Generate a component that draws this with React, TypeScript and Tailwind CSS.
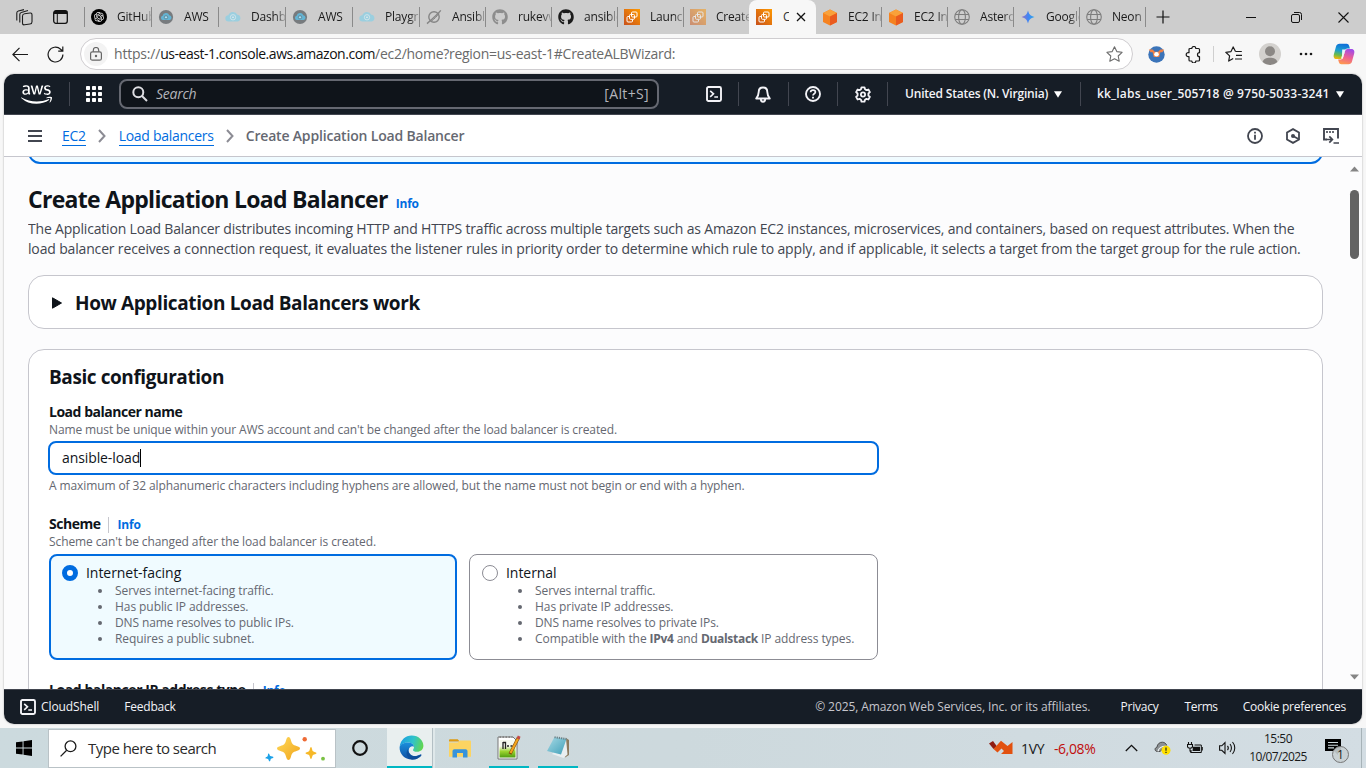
import type { ReactNode } from "react";
import { FaAws, FaGithub } from "react-icons/fa";
import { RiOpenaiFill } from "react-icons/ri";

/* ---------- favicons ---------- */

const CloudEye = ({ dark = false }: { dark?: boolean }) => (
  <svg width="18" height="16" viewBox="0 0 18 16" className={dark ? "" : "opacity-75"}>
    {dark && <circle cx="9" cy="8" r="8" fill="#777b7e" />}
    <path
      d={dark ? "M5.500 11.500a2.500 2.500 0 0 1-.3-4.900 3.900 3.900 0 0 1 7.500-.6 2.800 2.800 0 0 1 .4 5.500z" : "M4 13a3.500 3.500 0 0 1-.3-7A5.600 5.600 0 0 1 14 5.500a3.800 3.800 0 0 1 .3 7.500z"}
      fill={dark ? "#63b4d4" : "#8bd0e6"}
    />
    <circle cx="9" cy="8.300" r={dark ? 2 : 3} fill="none" stroke={dark ? "#6a8d9c" : "#d5edf5"} strokeWidth="1" />
    <circle cx="9" cy="8.300" r=".9" fill={dark ? "#dff3fa" : "#ffffff"} />
  </svg>
);

const AnsibleDoc = () => (
  <svg width="16" height="16" viewBox="0 0 16 16" fill="none" stroke="#858585" strokeWidth="1.400">
    <circle cx="8" cy="8" r="5.200" />
    <path d="M1 14.600C4 12 11.500 5.500 14.800 1.400" />
    <path d="M5 12.500C8 10 11 7.500 13 4.500" strokeWidth="1" />
  </svg>
);

const Ec2Tile = ({ faded = false }: { faded?: boolean }) => (
  <svg width="16" height="16" viewBox="0 0 16 16" className={faded ? "opacity-50" : ""}>
    <defs>
      <linearGradient id="ec2" x1="0" y1="1" x2="1" y2="0">
        <stop offset="0" stopColor="#c8511b" />
        <stop offset="1" stopColor="#ff9900" />
      </linearGradient>
    </defs>
    <rect width="16" height="16" fill="url(#ec2)" />
    <g fill="none" stroke="#fff" strokeWidth="1">
      <rect x="7.500" y="3" width="5.500" height="5" rx="1" />
      <rect x="5.500" y="5.500" width="5" height="4.800" rx="1" />
      <path d="M5.500 7.500H4a1 1 0 0 0-1 1v3.500a1 1 0 0 0 1 1h3.500a1 1 0 0 0 1-1v-1.500" />
    </g>
  </svg>
);

const Cube = () => (
  <svg width="16" height="17" viewBox="0 0 16 17">
    <path d="M8 .5 15 4v9L8 16.500 1 13V4z" fill="#f58220" />
    <path d="M8 .5 15 4 8 7.500 1 4z" fill="#f9a13a" />
    <path d="M15 4v9l-7 3.500v-9z" fill="#ea5b1f" />
  </svg>
);

const GlobeIcon = () => (
  <svg width="16" height="16" viewBox="0 0 16 16" fill="none" stroke="#7d7d7d" strokeWidth="1.100">
    <circle cx="8" cy="8" r="7.300" />
    <ellipse cx="8" cy="8" rx="3.400" ry="7.300" />
    <path d="M1.200 5.500h13.600M1.200 10.500h13.600" />
  </svg>
);

const Gemini = () => (
  <svg width="14" height="16" viewBox="0 0 14 16">
    <defs>
      <linearGradient id="gem" x1="0" y1="0" x2="1" y2="0">
        <stop offset="0" stopColor="#9a72c0" />
        <stop offset=".5" stopColor="#4285f4" />
        <stop offset="1" stopColor="#2da8e8" />
      </linearGradient>
    </defs>
    <path d="M7 1.500c1 3.800 2.500 5.500 6.500 6.500-4 1-5.500 2.700-6.500 6.500C6 10.700 4.500 9 .5 8 4.500 7 6 5.300 7 1.500z" fill="url(#gem)" />
  </svg>
);

const OpenAi = () => (
  <span className="flex h-4 w-4 items-center justify-center rounded-full bg-black text-white">
    <RiOpenaiFill size={12} />
  </span>
);

type TabData = { title: string; icon: ReactNode; active?: boolean; wide?: boolean };
const tabs: TabData[] = [
  { title: "GitHub", icon: <OpenAi />, wide: true },
  { title: "AWS", icon: <CloudEye dark />, wide: true },
  { title: "Dashbo", icon: <CloudEye />, wide: true },
  { title: "AWS", icon: <CloudEye dark />, wide: true },
  { title: "Playgro", icon: <CloudEye />, wide: true },
  { title: "Ansible", icon: <AnsibleDoc /> },
  { title: "rukevw", icon: <FaGithub size={16} color="#8d8d8d" /> },
  { title: "ansible", icon: <FaGithub size={16} color="#1b1b1b" /> },
  { title: "Launch", icon: <Ec2Tile /> },
  { title: "Create", icon: <Ec2Tile faded /> },
  { title: "C", icon: <Ec2Tile />, active: true },
  { title: "EC2 Ins", icon: <Cube /> },
  { title: "EC2 Ins", icon: <Cube /> },
  { title: "Astero", icon: <GlobeIcon /> },
  { title: "Google", icon: <Gemini /> },
  { title: "Neon", icon: <GlobeIcon /> },
];

function Tab({ title, icon, active, wide }: TabData) {
  if (active) {
    return (
      <div className="-ml-px flex h-[34px] w-[67px] shrink-0 items-center rounded-t-lg bg-[#f7f7f7] pl-[7px]">
        <span className="flex w-4 shrink-0 justify-center">{icon}</span>
        <span className="ml-[11px] w-[6px] overflow-hidden text-[#333]">{title}</span>
        <svg width="10" height="10" viewBox="0 0 10 10" className="ml-[7px]" stroke="#111" strokeWidth="1.300">
          <path d="M1 1l8 8M9 1 1 9" />
        </svg>
      </div>
    );
  }
  return (
    <div className={`flex h-[34px] shrink-0 items-center pl-[6px] ${wide ? "w-[67px]" : "w-[66px]"}`}>
      <span className="flex w-4 shrink-0 justify-center">{icon}</span>
      <span className="ml-[10px] flex-1 overflow-hidden whitespace-nowrap [mask-image:linear-gradient(to_right,#000_70%,transparent_108%)]">{title}</span>
      <span className="h-[20px] w-px bg-[#8a8a8a]" />
    </div>
  );
}

function TabStrip() {
  return (
    <div className="flex h-[34px] items-center bg-[#cdcdcd] font-['Open_Sans','Noto_Sans',sans-serif] text-[12px] tracking-[-0.2px] text-[#1a1a1a]">
      <div className="flex w-[84px] shrink-0 items-center pl-[16px]">
        <svg width="17" height="17" viewBox="0 0 17 17" fill="none" stroke="#1d1d1d" strokeWidth="1.100">
          <rect x="6.500" y="4" width="9.500" height="11" rx="2" transform="skewY(-8) translate(0 2)" />
          <path d="M3.800 13.500V5.500a2 2 0 0 1 1.500-2L12 1.500M.8 11.500V4a2 2 0 0 1 1.500-2L8 .6" />
        </svg>
        <svg width="15" height="14" viewBox="0 0 15 14" className="ml-[20px]">
          <rect x=".7" y=".7" width="13.600" height="12.600" rx="2.200" fill="none" stroke="#111" strokeWidth="1.300" />
          <path d="M1 1h13v3H1z" fill="#111" />
          <path d="M4.300 4v9" stroke="#111" strokeWidth="1" />
        </svg>
      </div>
      <span className="h-[20px] w-px bg-[#8a8a8a]" />
      {tabs.map((t, i) => (
        <Tab key={i} {...t} />
      ))}
      <svg width="14" height="14" viewBox="0 0 14 14" className="ml-[10px] shrink-0" stroke="#111" strokeWidth="1.200">
        <path d="M7 .5v13M.5 7h13" />
      </svg>
      <div className="ml-[76px] flex items-center">
        <svg width="10" height="10" viewBox="0 0 10 10" stroke="#111">
          <path d="M0 5.500h10" />
        </svg>
        <svg width="11" height="11" viewBox="0 0 11 11" className="ml-[35px]" fill="none" stroke="#111">
          <rect x=".5" y="2.500" width="8" height="8" rx="1.500" />
          <path d="M3 .5h5.500a2 2 0 0 1 2 2V8" />
        </svg>
        <svg width="11" height="11" viewBox="0 0 11 11" className="ml-[36px]" stroke="#111" strokeWidth="1.100">
          <path d="M.5.5l10 10M10.500.5l-10 10" />
        </svg>
      </div>
    </div>
  );
}

const Copilot = () => (
  <svg width="22" height="22" viewBox="0 0 22 22">
    <defs>
      <linearGradient id="cp1" x1=".5" y1="0" x2=".3" y2="1">
        <stop offset="0" stopColor="#0f6fd8" />
        <stop offset=".45" stopColor="#1b9fd0" />
        <stop offset=".75" stopColor="#6cbb4a" />
        <stop offset="1" stopColor="#f5b50a" />
      </linearGradient>
      <linearGradient id="cp2" x1=".6" y1="0" x2=".3" y2="1">
        <stop offset="0" stopColor="#a24be8" />
        <stop offset=".5" stopColor="#ec5f95" />
        <stop offset="1" stopColor="#ff9a4d" />
      </linearGradient>
    </defs>
    <path d="M6.500.8h7.200c1.300 0 2 .8 2.400 2l.8 2.700h-2.600c-1.300 0-2 .7-2.400 2l-2 6.500c-.4 1.300-1.200 2-2.500 2H3.600C.8 16 .2 13.600.9 11.200L3 3.500C3.500 1.800 4.800.8 6.500.8z" fill="url(#cp1)" />
    <path d="M15.500 21.200H8.300c-1.300 0-2-.8-2.400-2l-.8-2.700h2.600c1.300 0 2-.7 2.400-2l2-6.500c.4-1.300 1.200-2 2.500-2h3.800c2.800 0 3.400 2.400 2.700 4.800L19 18.500c-.5 1.700-1.800 2.700-3.500 2.700z" fill="url(#cp2)" />
    <path d="M9.200 6.500h3.200l-1 3.500-1.600 5.500H8l1-3z" fill="#fff" opacity=".9" />
  </svg>
);

function AddressBar() {
  return (
    <div className="flex h-10 items-center bg-[#f7f7f7] font-['Open_Sans','Noto_Sans',sans-serif]">
      <svg width="17" height="15" viewBox="0 0 17 15" className="ml-[12px]" fill="none" stroke="#1b1b1b" strokeWidth="1.200">
        <path d="M16 7.500H1M7.500.8.9 7.500l6.600 6.700" />
      </svg>
      <svg width="17" height="17" viewBox="0 0 17 17" className="ml-[18px]" fill="none" stroke="#1b1b1b" strokeWidth="1.200">
        <path d="M15.900 8.500a7.400 7.400 0 1 1-2.300-5.300L15.800 5.200M15.800.6v4.600h-4.600" />
      </svg>
      <div className="ml-[16px] flex h-8 w-[1053px] items-center rounded-full border border-[#cfcdd0] bg-white pl-[3px]">
        <span className="flex h-[24px] w-[24px] items-center justify-center rounded-full bg-[#f3f3f3]">
          <svg width="12" height="14" viewBox="0 0 12 14" fill="none" stroke="#666" strokeWidth="1.200">
            <rect x=".6" y="4.800" width="10.800" height="8.400" rx="1.800" />
            <path d="M3.300 4.800V3.200a2.700 2.700 0 0 1 5.400 0v1.600" />
            <circle cx="6" cy="9" r=".6" fill="#666" />
          </svg>
        </span>
        <span className="ml-[6px] whitespace-nowrap text-[14px] leading-5 tracking-[-0.47px] text-[#111]">
          <span className="tracking-[-0.2px] text-[#6a6a6a]">https://</span>us-east-1.console.aws.amazon.com<span className="tracking-[-0.28px] text-[#6a6a6a]">/ec2/home?region=us-east-1#CreateALBWizard:</span>
        </span>
        <svg width="17" height="16" viewBox="0 0 17 16" className="ml-auto mr-[9px]" fill="none" stroke="#6d6d6d" strokeWidth="1.100" strokeLinejoin="round">
          <path d="m8.500.8 2.300 4.800 5.300.7-3.900 3.700 1 5.200-4.700-2.500-4.700 2.500 1-5.200L.9 6.300l5.300-.7z" />
        </svg>
      </div>
      <svg width="17" height="17" viewBox="0 0 17 17" className="ml-[15px]">
        <circle cx="8.500" cy="8.500" r="8.200" fill="#3b74b9" />
        <path d="M.8 3.500h3.800l2.200 2.200h3.400l2.200-2.200h3.800l-1.800 2.800h-2l-1.200 4.700H5.800L4.600 6.300h-2z" fill="#f08044" />
        <circle cx="8.500" cy="8.300" r="2.300" fill="#fff" />
      </svg>
      <svg width="17" height="17" viewBox="0 0 17 17" className="ml-[20px]" fill="none" stroke="#1b1b1b" strokeWidth="1.200" strokeLinejoin="round">
        <path d="M5 2.500h1.800a2 2 0 0 1 4 0h2.700a1 1 0 0 1 1 1v3.200a2 2 0 0 0 0 4V14a1 1 0 0 1-1 1h-2.700a2 2 0 0 1-4 0H5a1 1 0 0 1-1-1v-3.300h-.8a2 2 0 0 1 0-4H4V3.500a1 1 0 0 1 1-1z" />
      </svg>
      <span className="ml-[11px] h-4 w-px bg-[#cfcfcf]" />
      <svg width="18" height="16" viewBox="0 0 18 16" className="ml-[11px]" fill="none" stroke="#1b1b1b" strokeWidth="1.200" strokeLinejoin="round">
        <path d="M10.500 5.500 8.200.9 6 5.600l-5.200.7 3.800 3.600-.9 5.200 4.500-2.500M10.500 5.500h6.300M11 9.300h6M10 13h7" />
      </svg>
      <svg width="22" height="22" viewBox="0 0 22 22" className="ml-[16px]">
        <circle cx="11" cy="11" r="11" fill="#d3d1ce" />
        <circle cx="11" cy="8.300" r="5" fill="#8b8885" />
        <path d="M3.600 19.100C4.500 15.700 7 14.700 11 14.700s6.500 1 7.400 4.400A11 11 0 0 1 11 22a11 11 0 0 1-7.400-2.900z" fill="#8b8885" />
      </svg>
      <svg width="14" height="4" viewBox="0 0 14 4" className="ml-[18px]" fill="#1b1b1b">
        <circle cx="2" cy="2" r="1.300" />
        <circle cx="7" cy="2" r="1.300" />
        <circle cx="12" cy="2" r="1.300" />
      </svg>
      <span className="ml-[20px]">
        <Copilot />
      </span>
    </div>
  );
}

/* ---------- console chrome ---------- */

const ShellIcon = () => (
  <svg width="16" height="16" viewBox="0 0 16 16" fill="none" stroke="currentColor" strokeWidth="1.900">
    <rect x="1" y="1" width="14" height="14" rx="1.500" />
    <path d="m4.200 4.800 3.300 3-3.300 3M8.300 11h3.700" strokeWidth="1.600" />
  </svg>
);

const Caret = () => (
  <svg width="8" height="7" viewBox="0 0 8 7" fill="#fff">
    <path d="M0 .3h8L4 6.700z" />
  </svg>
);

const VLine = ({ className = "" }: { className?: string }) => <span className={`h-6 w-px bg-[#424650] ${className}`} />;

function AwsHeader() {
  return (
    <header className="flex h-[41px] shrink-0 items-center border-b border-[#424650] bg-[#161d26] text-[#f3f3f7]">
      <FaAws className="ml-[17px] mt-[1px] h-[27px] w-[31px] text-white" />
      <VLine className="ml-[17px]" />
      <svg width="16" height="16" viewBox="0 0 16 16" className="ml-[16px]" fill="#fff">
        {[0, 6, 12].map((y) => [0, 6, 12].map((x) => <rect key={`${x}${y}`} x={x} y={y} width="4" height="4" rx=".8" />))}
      </svg>
      <div className="ml-[17px] flex h-[30px] w-[540px] items-center rounded-lg border-2 border-[#656871] bg-[#0f141a] pl-[11px] pr-[8px] text-[14px] leading-4 text-[#b4b4bb]">
        <svg width="16" height="16" viewBox="0 0 16 16" fill="none" stroke="#dedee3" strokeWidth="2">
          <circle cx="6.300" cy="6.300" r="5" />
          <path d="m10 10 5 5" />
        </svg>
        <span className="ml-[8px] italic tracking-[-0.25px]">Search</span>
        <span className="ml-auto tracking-[0.35px]">[Alt+S]</span>
      </div>
      <span className="ml-[47px]">
        <ShellIcon />
      </span>
      <VLine className="ml-[16px]" />
      <svg width="16" height="17" viewBox="0 0 16 17" className="ml-[16px]" fill="none" stroke="currentColor" strokeWidth="1.900" strokeLinejoin="round">
        <path d="M8 1.500c-2.700 0-4.300 2-4.300 4.500 0 3-1 4.500-2.500 6.500h13.600c-1.500-2-2.500-3.500-2.500-6.500 0-2.500-1.600-4.500-4.300-4.500z" />
        <path d="M5.800 13c0 1.800.9 2.700 2.200 2.700s2.200-.9 2.200-2.700" />
      </svg>
      <VLine className="ml-[17px]" />
      <svg width="16" height="16" viewBox="0 0 16 16" className="ml-[16px]" fill="none" stroke="currentColor" strokeWidth="1.900">
        <circle cx="8" cy="8" r="7" />
        <path d="M5.600 6.200C5.700 4.800 6.700 4.100 8 4.100s2.400.8 2.400 2c0 1.700-2.400 1.700-2.400 3.400" strokeWidth="1.700" />
        <path d="M8 10.700v1.800" />
      </svg>
      <VLine className="ml-[16px]" />
      <svg width="16" height="17" viewBox="0 0 16 17" className="ml-[17px]" fill="none" stroke="currentColor" strokeWidth="1.800" strokeLinejoin="round">
        <path d="M6.500 1.300h3l.5 2 1.400.8 2-.6 1.500 2.600-1.500 1.400v2l1.500 1.400-1.500 2.600-2-.6-1.400.8-.5 2h-3l-.5-2-1.400-.8-2 .6L1.100 10.900l1.500-1.400v-2L1.100 6.100l1.500-2.600 2 .6L6 3.300z" />
        <circle cx="8" cy="8.500" r="2.100" />
      </svg>
      <VLine className="ml-[16px]" />
      <span className="ml-[17px] whitespace-nowrap text-[12px] font-semibold tracking-[-0.2px]">United States (N. Virginia)</span>
      <span className="ml-[6px]">
        <Caret />
      </span>
      <VLine className="ml-[18px]" />
      <span className="ml-[16px] whitespace-nowrap text-[12px] font-semibold tracking-[0.17px]">kk_labs_user_505718 @ 9750-5033-3241</span>
      <span className="ml-[6px]">
        <Caret />
      </span>
    </header>
  );
}

const Chevron = () => (
  <svg width="8" height="14" viewBox="0 0 8 14" fill="none" stroke="#8c8c94" strokeWidth="2">
    <path d="m1 1 5.500 6L1 13" />
  </svg>
);

function Breadcrumbs() {
  return (
    <nav className="flex h-[42px] shrink-0 items-center border-b border-[#c6c6cd] bg-white text-[14px] text-[#424650]">
      <svg width="14" height="12" viewBox="0 0 14 12" className="ml-[24px]" fill="#424650">
        <path d="M0 0h14v2H0zM0 5h14v2H0zM0 10h14v2H0z" />
      </svg>
      <a className="ml-[20px] mt-[1px] border-b border-[#006ce0] leading-[18px] tracking-[-0.3px] text-[#006ce0]">EC2</a>
      <span className="ml-[12px]">
        <Chevron />
      </span>
      <a className="ml-[13px] mt-[1px] border-b border-[#006ce0] leading-[18px] tracking-[-0.28px] text-[#006ce0]">Load balancers</a>
      <span className="ml-[12px]">
        <Chevron />
      </span>
      <span className="ml-[12px] font-semibold leading-[18px] tracking-[-0.18px] text-[#656871]">Create Application Load Balancer</span>
      <div className="ml-auto mr-[23px] flex items-center gap-[22px]">
        <svg width="16" height="16" viewBox="0 0 16 16" fill="none" stroke="currentColor" strokeWidth="1.800">
          <circle cx="8" cy="8" r="7" />
          <path d="M8 6.800v5M8 3.800v1.700" />
        </svg>
        <svg width="16" height="16" viewBox="0 0 16 16" fill="none" stroke="currentColor" strokeWidth="1.800">
          <path d="m8 1.100 6 3.400v7L8 14.900l-6-3.400v-7z" />
          <circle cx="8" cy="8" r="2" fill="currentColor" stroke="none" />
          <path d="m8 8 5.500 3" />
        </svg>
        <svg width="16" height="16" viewBox="0 0 16 16" fill="none" stroke="currentColor" strokeWidth="1.900">
          <path d="M4 11.500H1V1h14v9.500" />
          <path d="M4 3v2M7 3v2M10 3v2" strokeWidth="1.600" />
          <path d="M3.500 11.500H9M6.300 8.300l3.100 3.200-3.100 3.200M10.500 15H16" strokeWidth="1.700" />
        </svg>
      </div>
    </nav>
  );
}

/* ---------- form ---------- */

const Info = () => <a className="text-[12px] font-bold tracking-[-0.2px] text-[#006ce0]">Info</a>;

function FieldLabel({ children, info = false }: { children: ReactNode; info?: boolean }) {
  return (
    <div className="flex h-5 items-center whitespace-nowrap text-[14px] font-bold leading-5 tracking-[-0.48px] text-[#0f141a]">
      <span>{children}</span>
      {info && (
        <span className="ml-[7px] mt-[2px] flex h-4 items-center border-l border-[#c6c6cd] pl-[9px] leading-4">
          <Info />
        </span>
      )}
    </div>
  );
}

function Tile({ title, items, selected = false }: { title: string; items: ReactNode[]; selected?: boolean }) {
  return (
    <div
      className={
        selected
          ? "h-[106px] w-[408px] rounded-lg border-2 border-[#006ce0] bg-[#f0fbff] pl-[11px] pt-[7px]"
          : "h-[106px] w-[409px] rounded-lg border border-[#8c8c94] bg-white pl-[12px] pt-[8px]"
      }
    >
      <div className="flex h-5 items-center text-[14px] leading-5 tracking-[-0.05px] text-[#0f141a]">
        <span className={selected ? "h-4 w-4 rounded-full border-[5px] border-[#006ce0] bg-white" : "h-4 w-4 rounded-full border border-[#8c8c94] bg-white"} />
        <span className="ml-2">{title}</span>
      </div>
      <ul className="text-[12px] leading-4 tracking-[-0.07px] text-[#656871]">
        {items.map((item, i) => (
          <li key={i} className="flex items-center whitespace-nowrap">
            <span className="ml-[36px] mr-[13px] h-1 w-1 rounded-full bg-[#656871]" />
            <span>{item}</span>
          </li>
        ))}
      </ul>
    </div>
  );
}

function ConsoleContent() {
  return (
    <div className="flex min-h-0 flex-1 bg-[#fcfcfd]">
      <main className="ml-[24px] flex w-[1295px] flex-col overflow-hidden text-[#0f141a]">
        <div className="-mt-[20px] h-[27px] shrink-0 rounded-b-xl border-2 border-[#006ce0] bg-[#f0fbff]" />
        <div className="mt-[20px] flex h-[30px] shrink-0 items-baseline">
          <h1 className="whitespace-nowrap text-[23px] font-bold leading-[30px] tracking-[-0.7px]">Create Application Load Balancer</h1>
          <span className="ml-[8px]">
            <Info />
          </span>
        </div>
        <p className="mt-[5px] shrink-0 whitespace-nowrap text-[14px] leading-5 tracking-[-0.184px] text-[#424650]">
          The Application Load Balancer distributes incoming HTTP and HTTPS traffic across multiple targets such as Amazon EC2 instances, microservices, and containers, based on request attributes. When the
          <br />
          <span className="tracking-[-0.16px]">
            load balancer receives a connection request, it evaluates the listener rules in priority order to determine which rule to apply, and if applicable, it selects a target from the target group for the rule action.
          </span>
        </p>

        <section className="mt-[16px] flex h-[54px] shrink-0 items-center rounded-2xl border border-[#c6c6cd] bg-white pl-[23px]">
          <svg width="10" height="12" viewBox="0 0 10 12" className="mt-[2px]" fill="#0f141a" stroke="#0f141a" strokeLinejoin="round">
            <path d="M.5.8 9.500 6 .5 11.200z" />
          </svg>
          <h2 className="ml-[13px] mt-[3px] whitespace-nowrap text-[19px] font-bold tracking-[-0.38px]">How Application Load Balancers work</h2>
        </section>

        <section className="mt-[20px] h-[380px] shrink-0 rounded-t-2xl border border-[#c6c6cd] bg-white pl-[20px] pt-[15px]">
          <h2 className="h-6 text-[19px] font-bold leading-6 tracking-[-0.42px]">Basic configuration</h2>

          <div className="mt-[13px] w-[829px]">
            <FieldLabel>Load balancer name</FieldLabel>
            <p className="text-[12px] leading-4 tracking-[-0.117px] text-[#656871]">Name must be unique within your AWS account and can't be changed after the load balancer is created.</p>
            <div className="-mx-px mt-[3px] flex h-[34px] items-center rounded-lg border-2 border-[#006ce0] bg-white pl-[12px] text-[14px] leading-5 tracking-[-0.1px]">
              <span>ansible-load</span>
              <span className="h-[18px] w-px bg-black" />
            </div>
            <p className="mt-[3px] text-[12px] leading-4 tracking-[-0.105px] text-[#656871]">
              A maximum of 32 alphanumeric characters including hyphens are allowed, but the name must not begin or end with a hyphen.
            </p>
          </div>

          <div className="mt-[20px] w-[829px]">
            <FieldLabel info>Scheme</FieldLabel>
            <p className="text-[12px] leading-4 tracking-[-0.1px] text-[#656871]">Scheme can't be changed after the load balancer is created.</p>
            <div className="mt-[4px] flex gap-[12px]">
              <Tile
                selected
                title="Internet-facing"
                items={["Serves internet-facing traffic.", "Has public IP addresses.", <span className="tracking-[-0.12px]">DNS name resolves to public IPs.</span>, "Requires a public subnet."]}
              />
              <Tile
                title="Internal"
                items={[
                  "Serves internal traffic.",
                  "Has private IP addresses.",
                  <span className="tracking-[-0.12px]">DNS name resolves to private IPs.</span>,
                  <>
                    Compatible with the <b className="tracking-[-0.3px]">IPv4</b> and <b className="tracking-[-0.3px]">Dualstack</b> IP address types.
                  </>,
                ]}
              />
            </div>
          </div>

          <div className="mt-[20px]">
            <FieldLabel info>
              <span className="tracking-[-0.42px]">Load balancer IP address type</span>
            </FieldLabel>
          </div>
        </section>
      </main>

      <div className="ml-auto flex w-[16px] flex-col items-center py-[9px]">
        <svg width="9" height="6" viewBox="0 0 9 6" fill="#858585">
          <path d="M4.500.5 9 5.500H0z" />
        </svg>
        <span className="mt-[18px] h-[69px] w-[9px] rounded-full bg-[#636363]" />
        <svg width="9" height="6" viewBox="0 0 9 6" className="mt-auto" fill="#858585">
          <path d="M0 .5h9l-4.500 5z" />
        </svg>
      </div>
    </div>
  );
}

function ConsoleFooter() {
  return (
    <footer className="flex h-[35px] shrink-0 items-center border-t border-[#424650] bg-[#161d26] text-[12px] font-medium text-[#f3f3f7]">
      <span className="ml-[16px]">
        <ShellIcon />
      </span>
      <span className="ml-[5px] tracking-[-0.1px]">CloudShell</span>
      <span className="ml-[25px] tracking-[-0.2px]">Feedback</span>
      <span className="ml-auto tracking-[-0.09px] text-[#c6c6cd]">© 2025, Amazon Web Services, Inc. or its affiliates.</span>
      <span className="ml-[30px] tracking-[-0.2px]">Privacy</span>
      <span className="ml-[26px] tracking-[-0.4px]">Terms</span>
      <span className="ml-[25px] mr-[16px] tracking-[-0.27px]">Cookie preferences</span>
    </footer>
  );
}

/* ---------- desktop taskbar ---------- */

const EdgeLogo = () => (
  <svg width="25" height="25" viewBox="0 0 25 25">
    <defs>
      <linearGradient id="ed1" x1="0" y1=".3" x2="1" y2=".5">
        <stop offset="0" stopColor="#1b9de2" />
        <stop offset=".55" stopColor="#2fc3c9" />
        <stop offset="1" stopColor="#62d64f" />
      </linearGradient>
      <linearGradient id="ed2" x1="0" y1="0" x2="0" y2="1">
        <stop offset="0" stopColor="#1a8fdc" />
        <stop offset="1" stopColor="#0f4fa3" />
      </linearGradient>
    </defs>
    <path d="M.7 11.500C1.500 5 6.500.5 12.700.5c7 0 11.700 5 11.700 10.300 0 3.800-2.900 6-6.300 6-2.700 0-4.100-.9-4.100-1.900 0-.8 1-1.200 1-3 0-2.200-2.300-4.400-5.800-4.400-4 0-7 1.800-8.500 4z" fill="url(#ed1)" />
    <path d="M.6 12c1-2.800 4.400-4.500 8.600-4.500 3.500 0 5.800 2.200 5.800 4.200-1-1-5.300-.7-5.300 3.600 0 4.200 4.500 6.700 8.300 5.500 2-.6 3.500-1.600 4.300-1.100.4.300-.2 1.100-.8 1.700A12.300 12.300 0 0 1 12.600 24.500C6 24.500.2 19 .6 12z" fill="url(#ed2)" />
    <path d="M9.500 13.500c-1.200 2.600.6 6.400 4.500 7.600 2.700.8 5.500-.2 7.800-1.500.4-.2.800.1.500.6-2 3-5.600 4.700-9.200 4.500-5-1-7.600-7-3.600-11.200z" fill="#0c4a94" opacity=".75" />
  </svg>
);

const Sparkles = () => (
  <svg width="60" height="26" viewBox="0 0 60 26">
    <defs>
      <linearGradient id="sp" x1="0" y1="0" x2="1" y2="1">
        <stop offset="0" stopColor="#ffd95a" />
        <stop offset="1" stopColor="#f0a51c" />
      </linearGradient>
    </defs>
    <path d="M23.500 1c1.300 0 1.900 1.500 2.500 3.500 1 3.500 2 4.400 5.500 5.500 2 .6 3.500 1.200 3.500 2.400s-1.500 1.900-3.500 2.500c-3.500 1-4.500 2-5.500 5.500-.6 2-1.200 3.500-2.500 3.500s-1.900-1.500-2.500-3.500c-1-3.500-2-4.500-5.500-5.500-2-.6-3.500-1.300-3.500-2.500s1.500-1.800 3.500-2.400c3.500-1.100 4.500-2 5.500-5.500.6-2 1.200-3.500 2.500-3.500z" fill="url(#sp)" />
    <path d="M46 11c1 0 1 3.500 2 4.300s3.500 1 3.500 1.900-2.500 1-3.500 1.900-1 4-2 4-1-3.100-2-4-3.500-1-3.500-1.900 2.500-1 3.500-1.900S45 11 46 11z" fill="#f6b828" />
    <path d="M3.500 17.500c1 0 1 2 1.800 2.500s3.200.3 3.200 1.200-2 1-2.600 1.600-.3 2.700-1.200 2.700-1-1.900-1.700-2.400-2.600-.2-2.600-1.100 1.700-1.100 2.200-1.700.1-2.800.9-2.800z" fill="#1ba1e8" />
    <circle cx="39.700" cy="3.200" r="2.200" fill="#ee6a35" />
    <circle cx="58" cy="22.700" r="1.900" fill="#7ac143" />
  </svg>
);

function Taskbar() {
  return (
    <div className="flex h-10 items-center bg-linear-to-r from-[#ccdade] via-[#cdd9dd] to-[#d3dde3] font-['Open_Sans','Noto_Sans',sans-serif] text-[#1a1a1a]">
      <svg width="16" height="16" viewBox="0 0 16 16" className="ml-[16px]" fill="#000">
        <path d="M0 2.300 6.600 1.400v6.100H0zM7.500 1.200 16 0v7.500H7.500zM0 8.400h6.600v6.200L0 13.700zM7.500 8.400H16V16l-8.500-1.200z" />
      </svg>
      <div className="ml-[16px] flex h-[39px] w-[288px] items-center self-end border border-[#b9c2c6] bg-white">
        <svg width="17" height="17" viewBox="0 0 17 17" className="ml-[11px]" fill="none" stroke="#1b1b1b" strokeWidth="1.300">
          <circle cx="10.500" cy="6.300" r="5.400" />
          <path d="M6.700 10.300.6 16.400" />
        </svg>
        <span className="ml-[11px] whitespace-nowrap text-[15px] tracking-[-0.52px] text-[#2b2b2b]">Type here to search</span>
        <span className="ml-auto mr-[10px]">
          <Sparkles />
        </span>
      </div>
      <svg width="16" height="16" viewBox="0 0 16 16" className="ml-[16px]" fill="none" stroke="#111" strokeWidth="2.200">
        <circle cx="8" cy="8" r="6.800" />
      </svg>
      <div className="ml-[19px] flex h-10 w-[45px] items-center justify-center border-b-2 border-[#00b7c3] bg-[#e9efef] pl-[3px]">
        <EdgeLogo />
      </div>
      <span className="h-10 w-[3px] border-l border-[#b3bfc4] bg-[#dfe8ea]" />
      <svg width="22" height="19" viewBox="0 0 22 19" className="ml-[14px]">
        <path d="M0 1.500C0 .7.500.2 1.300.2h7.400l2 2.300H0z" fill="#dd9a12" />
        <path d="M0 3.500h8.700L11 1.500h9.700c.8 0 1.300.5 1.300 1.300v14.900H0z" fill="#fcd462" />
        <path d="M3.500 18.500v-6.300c0-1.200.8-2 2-2h11c1.200 0 2 .8 2 2v6.300H14V14H8v4.500z" fill="#3793dc" />
      </svg>
      <div className="ml-[18px] flex h-10 w-10 items-center justify-center border-b-2 border-[#00b7c3]">
        <svg width="24" height="25" viewBox="0 0 24 25">
          <defs>
            <linearGradient id="np" x1="0" y1="0" x2="0" y2="1">
              <stop offset=".35" stopColor="#f4f8ee" />
              <stop offset=".65" stopColor="#9bd430" />
              <stop offset="1" stopColor="#4f9c10" />
            </linearGradient>
          </defs>
          <path d="M1 2h15l4 4v18H1z" fill="#fff" stroke="#777" />
          <path d="M2.500 5h16v17.500h-16z" fill="url(#np)" />
          <path d="M2.500 2h13" stroke="#888" strokeDasharray="1.500 1.500" strokeWidth="2" />
          <path d="M6 7v7M6 7.500h2.500V14M10 11h2M13.500 11h2" stroke="#222" fill="none" strokeWidth="1.300" />
          <path d="m13 19 8.500-16.500" stroke="#7a4a0c" strokeWidth="3.200" />
          <path d="m13.500 18 7.500-14.500" stroke="#f2a21c" strokeWidth="2.200" />
          <path d="m21 3.800 1.200-2.600" stroke="#c44a4a" strokeWidth="3" />
        </svg>
      </div>
      <div className="ml-[9px] flex h-10 w-10 items-center justify-center border-b-2 border-[#00b7c3]">
        <svg width="24" height="24" viewBox="0 0 24 24">
          <defs>
            <linearGradient id="nt" x1="0" y1="0" x2="1" y2="1">
              <stop offset="0" stopColor="#a9dbe6" />
              <stop offset="1" stopColor="#3f9fb8" />
            </linearGradient>
          </defs>
          <path d="m20 3 3 2v15l-4 2.500z" fill="#8c7a5e" />
          <path d="m20 3.500 1.500 16-4 3.500L6 19z" fill="#e9eff1" />
          <path d="M8.500 2 20.500 4l-5.500 15.500L1 16z" fill="url(#nt)" />
          <path d="M8.500 2.200 20.500 4" stroke="#6d7f85" strokeDasharray="1.200 1" strokeWidth="2" />
        </svg>
      </div>

      <svg width="25" height="16" viewBox="0 0 25 16" className="ml-auto">
        <path d="M0 3.500 4 1l4 5.500L4.500 9z" fill="#8f1d12" />
        <path d="M4.500 9 12 .8l6.500 5.200L23.500 2v12H12l3-3-2.500-2.500-4 4z" fill="#e2510f" />
      </svg>
      <span className="ml-[7px] w-[25px] whitespace-nowrap text-[14px] tracking-[-0.3px]">1VY</span>
      <span className="ml-[8px] w-[43px] whitespace-nowrap text-[14px] tracking-[-0.4px] text-[#c00d0d]">-6,08%</span>
      <svg width="13" height="8" viewBox="0 0 13 8" className="ml-[28px]" fill="none" stroke="#111" strokeWidth="1.300">
        <path d="m.8 7 5.700-5.700L12.200 7" />
      </svg>
      <svg width="17" height="14" viewBox="0 0 17 14" className="ml-[16px]">
        <path d="M3 10.500C.5 10 .3 6.800 3 6.200 3.200 3 5.800 1 8.500 1.200c2 .1 3.500 1.300 4.200 3L6 10.500z" fill="#8b9093" stroke="#444" strokeWidth=".9" />
        <path d="M4 10.500c.5-3.500 4-5.500 8.500-5" stroke="#eef2f3" strokeWidth="1.300" fill="none" />
        <circle cx="12" cy="9.300" r="4.500" fill="#ffe000" />
        <path d="M12 6.500v3.300M12 10.800v1.200" stroke="#222" strokeWidth="1.200" />
      </svg>
      <svg width="16" height="13" viewBox="0 0 16 13" className="ml-[16px]">
        <path d="M1.500 0v2.500M4.500 0v2.500M.5 2.500h5v2c0 1-1 1.700-2.500 1.700S.5 5.500.5 4.500zM3 6.200V9h2" fill="none" stroke="#111" strokeWidth="1.100" />
        <path d="M7.500 3h6.800v7.500H3.600V8.500" fill="none" stroke="#111" />
        <path d="M6 4.800h7v4.200H5.500z" fill="#111" />
        <path d="M14.500 5h1.300v3.500h-1.300z" fill="#111" />
      </svg>
      <svg width="17" height="14" viewBox="0 0 17 14" className="ml-[16px]" fill="none" stroke="#111" strokeWidth="1.100">
        <path d="M.6 4.800h2.200L6 1.500v11L2.800 9.300H.6zM8.500 4.800c.9 1.200.9 3.200 0 4.400M11 3c1.900 2.200 1.900 5.800 0 8M13.500 1c3 3.300 3 8.700 0 12" />
      </svg>
      <div className="ml-[11px] flex w-[62px] flex-col items-center text-[12px] leading-[18px]">
        <span className="tracking-[-0.5px]">15:50</span>
        <span className="tracking-[-0.6px]">10/07/2025</span>
      </div>
      <div className="relative ml-[16px] mr-[12px] h-6 w-6">
        <svg width="24" height="24" viewBox="0 0 24 24">
          <path d="M0 3h16v12h-3v4l-4-4H0z" fill="#000" />
          <path d="M3 6.500h10M3 9.200h10M3 11.900h6" stroke="#cdd9dd" strokeWidth="1.100" />
        </svg>
        <span className="absolute left-[7px] top-[10px] flex h-[17px] w-[17px] items-center justify-center rounded-full border border-[#777] bg-[#c8cfd2]/90 text-[12px] leading-none">1</span>
      </div>
      <span className="mr-[4px] h-10 w-px bg-[#a7b3b8]" />
    </div>
  );
}

export default function App() {
  return (
    <div className="flex h-[768px] w-[1366px] flex-col overflow-hidden bg-[#f7f7f7]">
      <TabStrip />
      <AddressBar />
      <div className="mx-[4px] flex h-[650px] shrink-0 flex-col overflow-hidden rounded-[10px] bg-white font-['Open_Sans','Noto_Sans',sans-serif] shadow-[0_0_2px_rgba(0,0,0,0.35)]">
        <AwsHeader />
        <Breadcrumbs />
        <ConsoleContent />
        <ConsoleFooter />
      </div>
      <div className="h-[4px] shrink-0" />
      <Taskbar />
    </div>
  );
}
